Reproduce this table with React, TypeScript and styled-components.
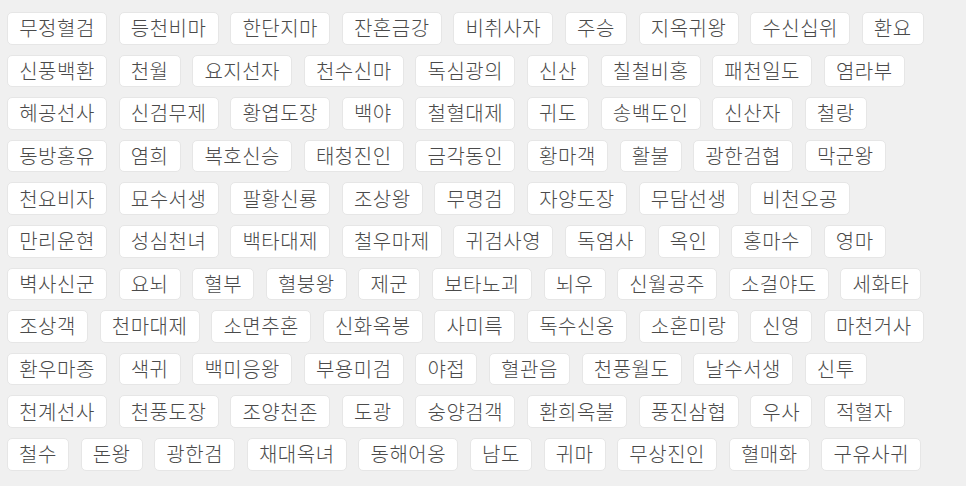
import React from "react";
import styled, { createGlobalStyle } from "styled-components";

const GlobalStyle = createGlobalStyle`
  html, body {
    margin: 0;
    padding: 0;
    background: #f0f0f0;
  }
  body {
    font-family: "Noto Sans CJK KR", "Noto Sans", sans-serif;
  }
`;

const TagList = styled.div`
  display: flex;
  flex-wrap: wrap;
  align-content: flex-start;
  column-gap: 11.6px;
  row-gap: 10px;
  padding: 12px 20px 12px 7px;
  box-sizing: border-box;
  width: 966px;
  min-height: 486px;
`;

const Tag = styled.span<{ $chars: number }>`
  display: inline-flex;
  align-items: center;
  justify-content: center;
  box-sizing: border-box;
  width: ${(p) => 24 + 19 * p.$chars}px;
  height: 32.6px;
  background: #ffffff;
  border: 1px solid #e6e6e6;
  border-radius: 5px;
  color: #4a4a4a;
  font-family: "Noto Sans CJK KR", "Noto Sans", sans-serif;
  font-size: 20px;
  font-weight: 300;
  letter-spacing: 0.5px;
  line-height: 1;
  white-space: nowrap;
`;

const names = [
  "무정혈검", "등천비마", "한단지마", "잔혼금강", "비취사자", "주승", "지옥귀왕", "수신십위", "환요",
  "신풍백환", "천월", "요지선자", "천수신마", "독심광의", "신산", "칠철비홍", "패천일도", "염라부",
  "혜공선사", "신검무제", "황엽도장", "백야", "철혈대제", "귀도", "송백도인", "신산자", "철랑",
  "동방홍유", "염희", "복호신승", "태청진인", "금각동인", "황마객", "활불", "광한검협", "막군왕",
  "천요비자", "묘수서생", "팔황신룡", "조상왕", "무명검", "자양도장", "무담선생", "비천오공",
  "만리운현", "성심천녀", "백타대제", "철우마제", "귀검사영", "독염사", "옥인", "홍마수", "영마",
  "벽사신군", "요뇌", "혈부", "혈붕왕", "제군", "보타노괴", "뇌우", "신월공주", "소걸야도", "세화타",
  "조상객", "천마대제", "소면추혼", "신화옥봉", "사미륵", "독수신옹", "소혼미랑", "신영", "마천거사",
  "환우마종", "색귀", "백미응왕", "부용미검", "야접", "혈관음", "천풍월도", "날수서생", "신투",
  "천계선사", "천풍도장", "조양천존", "도광", "숭양검객", "환희옥불", "풍진삼협", "우사", "적혈자",
  "철수", "돈왕", "광한검", "채대옥녀", "동해어옹", "남도", "귀마", "무상진인", "혈매화", "구유사귀",
];

export default function App() {
  return (
    <>
      <GlobalStyle />
      <TagList>
        {names.map((n, i) => (
          <Tag key={i} $chars={n.length}>
            {n}
          </Tag>
        ))}
      </TagList>
    </>
  );
}
